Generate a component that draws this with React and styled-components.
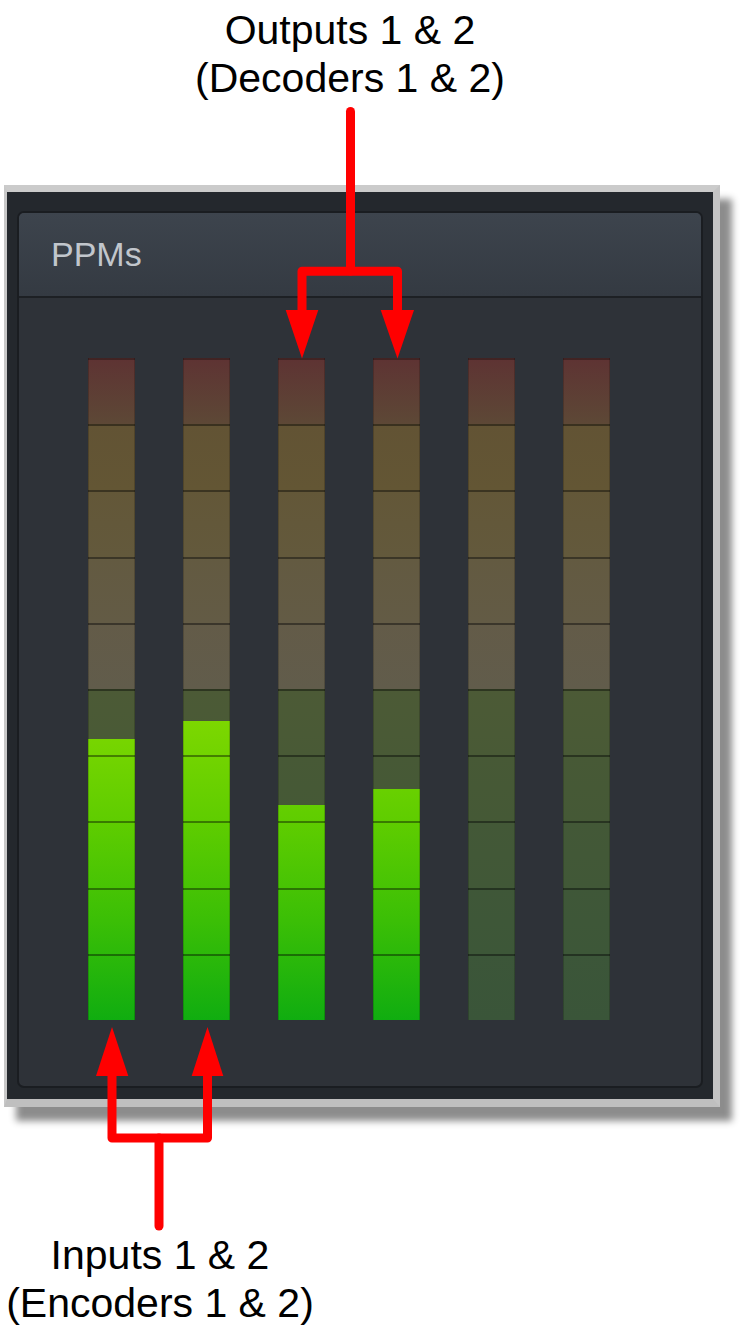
import React from "react";
import styled, { createGlobalStyle } from "styled-components";

const GlobalStyle = createGlobalStyle`
  html, body { margin: 0; padding: 0; background: #ffffff; }
  body { font-family: "Liberation Sans", Arial, sans-serif; }
  *, *::before, *::after { box-sizing: border-box; }
`;

const Page = styled.div`
  position: relative;
  width: 756px;
  height: 1331px;
  display: flex;
  flex-direction: column;
  overflow: hidden;
`;

const Caption = styled.div`
  width: ${(p) => p.$width}px;
  margin-top: ${(p) => p.$top}px;
  font-size: 41px;
  line-height: 48px;
  color: #000;
  text-align: center;
  white-space: nowrap;
`;

const Frame = styled.div`
  margin: 83px 0 0 4px;
  width: 716px;
  background: #24282d;
  border-style: solid;
  border-color: #cbcbcb #c4c4c4 #bfbfbf #c8c8c8;
  border-width: 7px 7px 8px 3px;
  padding: 19px 10px 11px 10px;
  box-shadow: 12px 14px 7px rgba(0, 0, 0, 0.45);
`;

const Panel = styled.div`
  border: 2px solid #1a1d21;
  border-radius: 7px;
  overflow: hidden;
  background: #2e3238;
`;

const Header = styled.div`
  height: 85px;
  display: flex;
  align-items: center;
  padding-left: 32px;
  background: linear-gradient(#3d444d, #343a42);
  border-bottom: 2px solid #1d2024;
  font-size: 34px;
  color: #c1c6cc;
`;

const MeterRow = styled.div`
  display: flex;
  gap: 48px;
  padding: 60px 0 66px 69px;
`;

const Meter = styled.div`
  position: relative;
  width: 47px;
  height: 662px;
  display: flex;
  flex-direction: column;
`;

const Segment = styled.div`
  flex: 1;
  background: ${(p) => p.$bg};
`;

const LitFill = styled.div`
  position: absolute;
  left: 0;
  right: 0;
  bottom: 0;
  background: linear-gradient(
    #a4e000 0%,
    #7cd700 55%,
    #5fcd00 70%,
    #3bbf06 85%,
    #10ad10 100%
  );
  background-size: 100% 662px;
  background-position: bottom;
`;

const Grid = styled.div`
  position: absolute;
  inset: 0;
  display: flex;
  flex-direction: column;
  box-shadow: inset 1px 0 0 rgba(0, 0, 0, 0.18), inset -1px 0 0 rgba(0, 0, 0, 0.18);
`;

const GridCell = styled.div`
  flex: 1;
  border-top: 2px solid rgba(0, 0, 0, ${(p) => (p.$first ? 0.3 : 0.4)});
`;

const Overlay = styled.svg`
  position: absolute;
  left: 0;
  top: 0;
  pointer-events: none;
`;

const SEGMENTS = [
  "linear-gradient(#5e3333, #5d4836)",
  "linear-gradient(#625334, #635634)",
  "linear-gradient(#635738, #63593c)",
  "linear-gradient(#635a41, #635b45)",
  "linear-gradient(#635b48, #615c4b)",
  "linear-gradient(#4c5a36, #495a36)",
  "linear-gradient(#475936, #455936)",
  "linear-gradient(#435837, #415837)",
  "linear-gradient(#3f5738, #3d5738)",
  "linear-gradient(#3c5639, #3a5539)",
];

const LEVELS = [0.4245, 0.4517, 0.3248, 0.349, 0, 0];

function PPM({ level }) {
  return (
    <Meter>
      {SEGMENTS.map((bg, i) => (
        <Segment key={i} $bg={bg} />
      ))}
      {level > 0 && <LitFill style={{ height: `${level * 100}%` }} />}
      <Grid>
        {SEGMENTS.map((_, i) => (
          <GridCell key={i} $first={i === 0} />
        ))}
      </Grid>
    </Meter>
  );
}

function Arrows() {
  const red = "#ff0000";
  return (
    <Overlay width="756" height="1331" viewBox="0 0 756 1331">
      <g stroke={red} strokeWidth="9" fill="none" strokeLinecap="round" strokeLinejoin="round">
        <path d="M350.5 111.5 V271" />
        <path d="M302 312 V271.3 H397.5 V312" />
        <path d="M112 1074 V1138 H207.5 V1074" />
        <path d="M159 1138 V1226" />
      </g>
      <g fill={red}>
        <polygon points="285.7,310 318.3,310 302,358.5" />
        <polygon points="380.7,310 414,310 397.5,358.5" />
        <polygon points="96,1076 128.3,1076 112,1027" />
        <polygon points="191.7,1076 223.3,1076 207.5,1027" />
      </g>
    </Overlay>
  );
}

export default function App() {
  return (
    <>
      <GlobalStyle />
      <Page>
        <Caption $width={700} $top={6}>
          Outputs 1 &amp; 2
          <br />
          (Decoders 1 &amp; 2)
        </Caption>
        <Frame>
          <Panel>
            <Header>PPMs</Header>
            <MeterRow>
              {LEVELS.map((lv, i) => (
                <PPM key={i} level={lv} />
              ))}
            </MeterRow>
          </Panel>
        </Frame>
        <Caption $width={320} $top={124}>
          Inputs 1 &amp; 2
          <br />
          (Encoders 1 &amp; 2)
        </Caption>
        <Arrows />
      </Page>
    </>
  );
}
